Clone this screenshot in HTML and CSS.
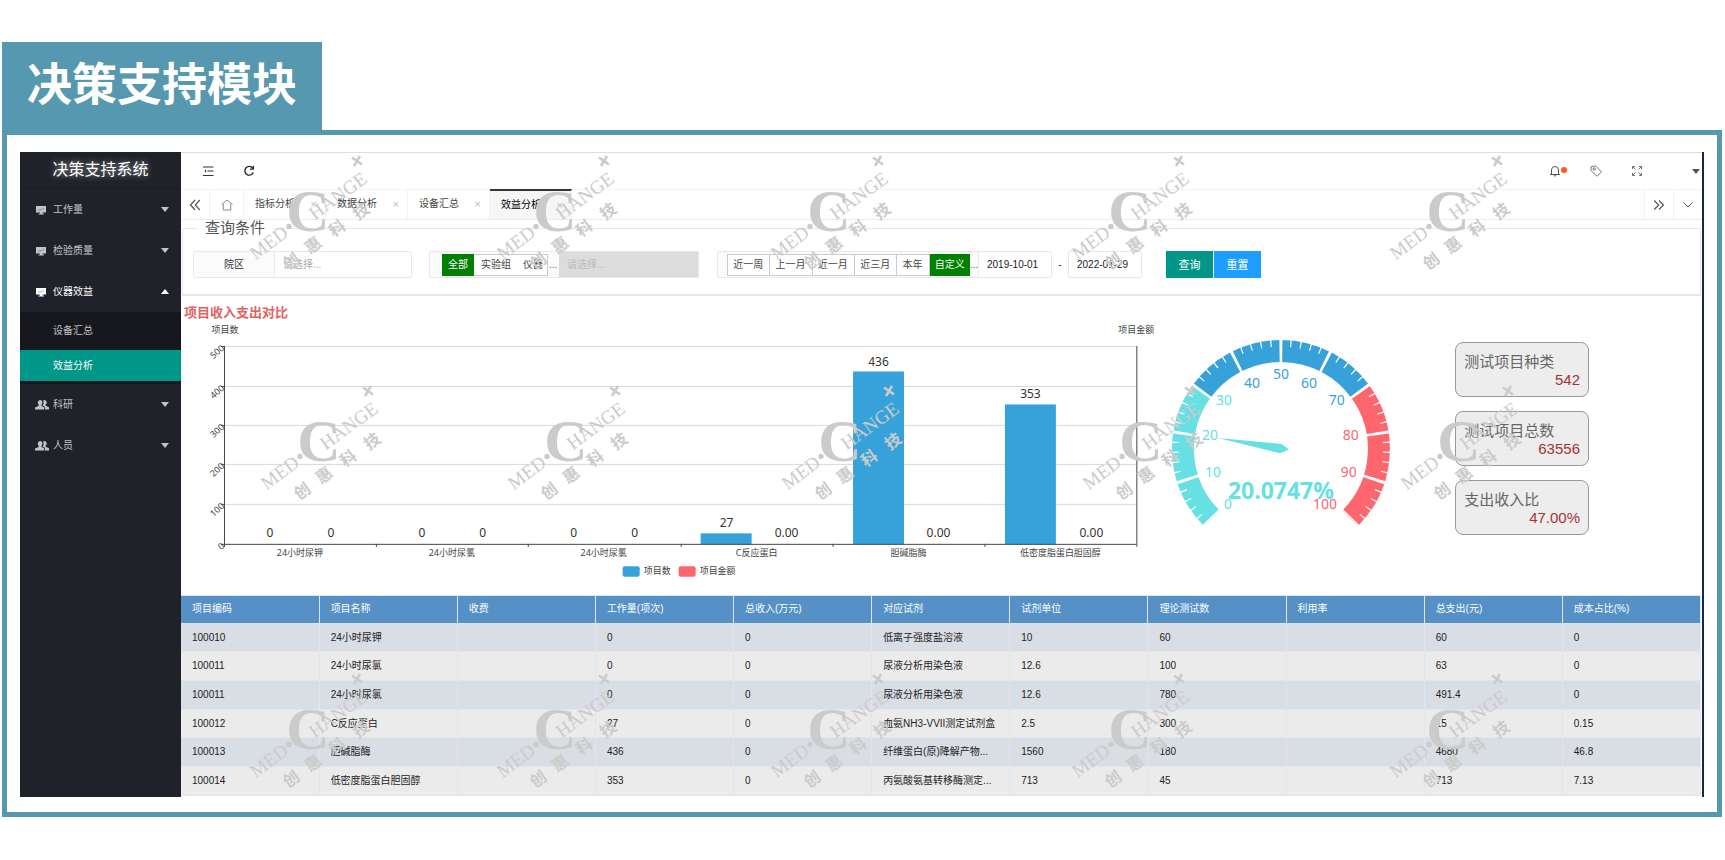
FILE: index.html
```html
<!DOCTYPE html>
<html lang="zh-CN">
<head>
<meta charset="utf-8">
<title>决策支持模块</title>
<link rel="stylesheet" href="styles.css">
</head>
<body>
<svg class="defs" aria-hidden="true">
  <symbol id="i-screen" viewBox="0 0 12 10"><path d="M1 1h10v6.500H7.500v1h1.500v1H3.500v-1H5v-1H1z" fill="currentColor"/><path d="M3 5.500l2-1 1.500.5L9 3.200" fill="none" stroke="#20222a" stroke-opacity=".5" stroke-width=".7"/></symbol>
  <symbol id="i-users" viewBox="0 0 14 10"><path d="M2.800 2.700a2.300 2.500 0 1 1 3.700 1.900v1.300L9 7.200V9.500H0V7.400l3.600-1.500V4.600A2.500 2.500 0 0 1 2.800 2.700z" fill="currentColor"/><path d="M8 .6a2.300 2.400 0 0 1 2.600 4v1.200L14 7.300v2.200H9.800V6.800L7.500 5.500c1.400-1.600 1.400-3.500.5-4.900z" fill="currentColor"/></symbol>
  <symbol id="i-wm" viewBox="0 0 150 130" overflow="visible">
    <g fill="#cbcbcb" text-anchor="middle">
      <text class="wm-roman" x="30" y="101" transform="rotate(-37 30 95)" font-size="19">MED</text>
      <circle cx="50" cy="78.500" r="2.700"/>
      <text class="wm-c" x="69" y="83" font-size="60">C</text>
      <text class="wm-roman" x="99" y="54" transform="rotate(-36 99 48)" font-size="19">HANGE</text>
      <path d="M113 9.500l10 7M115 18l6-10" stroke="#cbcbcb" stroke-width="2.600"/>
      <g class="wm-cn" font-size="16">
        <text x="52" y="119" transform="rotate(-36 52 113)">创</text>
        <text x="74" y="103" transform="rotate(-36 74 97)">惠</text>
        <text x="98" y="86" transform="rotate(-36 98 80)">科</text>
        <text x="122" y="69" transform="rotate(-36 122 63)">技</text>
      </g>
    </g>
  </symbol>
</svg>

<h1 class="module-title">决策支持模块</h1>
<div class="frame">
  <div class="app">
    <aside class="sidebar">
      <div class="logo">决策支持系统</div>
      <nav class="menu">
        <button class="menu-item" type="button"><svg class="mi"><use href="#i-screen"/></svg><span>工作量</span><i class="caret"></i></button>
        <button class="menu-item" type="button"><svg class="mi"><use href="#i-screen"/></svg><span>检验质量</span><i class="caret"></i></button>
        <button class="menu-item open" type="button"><svg class="mi"><use href="#i-screen"/></svg><span>仪器效益</span><i class="caret up"></i></button>
        <div class="submenu">
          <a href="#summary">设备汇总</a>
          <a class="active" href="#benefit">效益分析</a>
        </div>
        <button class="menu-item" type="button"><svg class="mi users"><use href="#i-users"/></svg><span>科研</span><i class="caret"></i></button>
        <button class="menu-item" type="button"><svg class="mi users"><use href="#i-users"/></svg><span>人员</span><i class="caret"></i></button>
      </nav>
    </aside>

    <main class="main">
      <header class="topbar">
        <button type="button" aria-label="折叠菜单"><svg width="12" height="12" viewBox="0 0 12 12" fill="none" stroke="#333"><path d="M1 2h10.500M5.500 6h6M1 10.500h10.500M3.500 4.800v2.400" stroke-width="1.200"/></svg></button>
        <button type="button" aria-label="刷新"><svg width="12" height="12" viewBox="0 0 12 12" fill="none" stroke="#222" stroke-width="1.300"><path d="M9.800 3.200A4.400 4.400 0 1 0 10.300 7.500"/><path d="M10.400.9v3.300H7"/></svg></button>
        <span class="spacer"></span>
        <button class="bell" type="button" aria-label="消息"><svg width="12" height="12" viewBox="0 0 12 12" fill="none" stroke="#555"><path d="M2.500 9V5a3.500 3.500 0 0 1 7 0v4M1 9.500h10M4.800 10.800h2.400"/></svg></button>
        <button type="button" aria-label="标签"><svg width="12" height="12" viewBox="0 0 12 12" fill="none" stroke="#666" stroke-width=".9"><path d="M1 1.800L5.500.8l6 6-4.500 4.500-6-5.800z"/><circle cx="4.200" cy="4" r="1.200"/></svg></button>
        <button type="button" aria-label="全屏"><svg width="12" height="12" viewBox="0 0 12 12" fill="none" stroke="#666" stroke-width=".9"><path d="M1.500 4V1.500H4M1.500 1.500L4.500 4.500M8 1.500h2.500V4M10.500 1.500L7.500 4.500M1.500 8v2.500H4M1.500 10.500L4.500 7.500M10.500 8v2.500H8M10.500 10.500L7.500 7.500"/></svg></button>
        <button class="user" type="button" aria-label="用户"><i class="caret dark"></i></button>
      </header>

      <div class="tabs">
        <button class="tool" type="button" aria-label="向左"><svg width="12" height="12" viewBox="0 0 12 12" fill="none" stroke="#555" stroke-width="1.200"><path d="M6 1L1.500 6 6 11M10.800 1L6.300 6l4.500 5"/></svg></button>
        <button class="tool home" type="button" aria-label="首页"><svg width="12" height="12" viewBox="0 0 12 12" fill="none" stroke="#888"><path d="M.5 5.500L6 1l5.500 4.500M2.300 5v6h7.400V5"/></svg></button>
        <a class="tab" href="#t1">指标分析<i>×</i></a>
        <a class="tab" href="#t2">数据分析<i>×</i></a>
        <a class="tab" href="#t3">设备汇总<i>×</i></a>
        <a class="tab current" href="#t4">效益分析<i>×</i></a>
        <span class="spacer"></span>
        <button class="tool right" type="button" aria-label="向右"><svg width="12" height="12" viewBox="0 0 12 12" fill="none" stroke="#555" stroke-width="1.200"><path d="M1.200 1.500L5.700 6l-4.500 4.500M6 1.500L10.500 6 6 10.500"/></svg></button>
        <button class="tool right" type="button" aria-label="更多"><svg width="12" height="12" viewBox="0 0 12 12" fill="none" stroke="#555"><path d="M1.500 3.500L6 8l4.500-4.500"/></svg></button>
      </div>

      <form>
        <fieldset class="query">
          <legend>查询条件</legend>
          <div class="query-row">
            <div class="field campus">
              <label for="campus">院区</label>
              <input id="campus" type="text" placeholder="请选择...">
            </div>
            <div class="field scope">
              <div class="seg">
                <button class="on" type="button">全部</button><button type="button">实验组</button><button type="button">仪器</button>
              </div>
              <span class="dots">...</span>
              <input type="text" aria-label="范围" placeholder="请选择..." disabled>
            </div>
            <div class="field period">
              <div class="seg lined">
                <button type="button">近一周</button><button type="button">上一月</button><button type="button">近一月</button><button type="button">近三月</button><button type="button">本年</button><button class="on" type="button">自定义</button>
              </div>
              <span class="dots">...</span>
              <input type="text" aria-label="开始日期" value="2019-10-01">
            </div>
            <span class="dash">-</span>
            <input class="end-date" type="text" aria-label="结束日期" value="2022-01-29">
            <div class="actions"><button class="search" type="button">查询</button><button class="reset" type="reset">重置</button></div>
          </div>
        </fieldset>
      </form>

      <h2 class="chart-title">项目收入支出对比</h2>
      <section class="charts">
        <svg class="bar-chart" viewBox="0 0 979 266" role="img" aria-label="项目收入支出对比">
          <path d="M44 24.500H956M44 64.500H956M44 103.500H956M44 142.500H956M44 182.500H956" stroke="#d8d8d8"/>
          <g fill="#37a2da"><rect x="520" y="211.500" width="51" height="11"/><rect x="672.500" y="49.500" width="51" height="173"/><rect x="824.500" y="82.500" width="51" height="140"/></g>
          <path d="M43.500 24V225M956.500 24V225M40 222.500H956M40 24.500h4M40 64.500h4M40 103.500h4M40 142.500h4M40 182.500h4M195.500 222v3M347.500 222v3M500.500 222v3M652.500 222v3M804.500 222v3" stroke="#444" fill="none"/>
          <g class="axis" text-anchor="middle">
            <text x="44" y="11">项目数</text><text x="956" y="11">项目金额</text>
            <text x="119" y="234">24小时尿钾</text><text x="271" y="234">24小时尿氯</text><text x="423" y="234">24小时尿氯</text><text x="576" y="234">C反应蛋白</text><text x="728" y="234">胆碱脂酶</text><text x="880" y="234">低密度脂蛋白胆固醇</text>
          </g>
          <g class="axis" text-anchor="end">
            <text transform="translate(44 27) rotate(-42)">500</text><text transform="translate(44 67) rotate(-42)">400</text><text transform="translate(44 106) rotate(-42)">300</text><text transform="translate(44 145) rotate(-42)">200</text><text transform="translate(44 185) rotate(-42)">100</text><text transform="translate(44 225) rotate(-42)">0</text>
          </g>
          <g class="value" text-anchor="middle">
            <text x="89" y="215">0</text><text x="150" y="215">0</text><text x="241" y="215">0</text><text x="302" y="215">0</text><text x="393" y="215">0</text><text x="454" y="215">0</text>
            <text x="546" y="205">27</text><text x="606" y="215">0.00</text><text x="698" y="44">436</text><text x="758" y="215">0.00</text><text x="850" y="76">353</text><text x="911" y="215">0.00</text>
          </g>
          <rect x="442" y="244.500" width="17" height="10.500" rx="2" fill="#37a2da"/><rect x="498" y="244.500" width="17" height="10.500" rx="2" fill="#fd666d"/>
          <g class="axis"><text x="463" y="252">项目数</text><text x="519" y="252">项目金额</text></g>
        </svg>

        <svg class="gauge" viewBox="0 0 240 266" role="img" aria-label="20.0747%">
          <g fill="none" stroke-width="22">
            <path d="M52.700 196.300A98 98 0 0 1 42.700 69.400" stroke="#67e0e3"/>
            <path d="M42.700 69.400A98 98 0 0 1 201.300 69.400" stroke="#37a2da"/>
            <path d="M201.300 69.400A98 98 0 0 1 191.300 196.300" stroke="#fd666d"/>
          </g>
          <path d="M47 202A106 106 0 1 1 197 202" pathLength="50" fill="none" stroke="#fff" stroke-width="7" stroke-dasharray=".12 .88" stroke-dashoffset=".06"/>
          <path d="M52.700 196.300A98 98 0 1 1 191.300 196.300" pathLength="10" fill="none" stroke="#fff" stroke-width="24" stroke-dasharray=".06 .94" stroke-dashoffset=".03"/>
          <path d="M59 116L122.500 122 130 127.700 121 131.300z" fill="#67e0e3"/>
          <g class="ticks" text-anchor="middle">
            <g fill="#67e0e3"><text x="69" y="187">0</text><text x="54" y="155">10</text><text x="51" y="118">20</text><text x="65" y="83">30</text></g>
            <g fill="#37a2da"><text x="93" y="66">40</text><text x="122" y="57">50</text><text x="150" y="66">60</text><text x="178" y="83">70</text></g>
            <g fill="#fd666d"><text x="192" y="118">80</text><text x="190" y="155">90</text><text x="166" y="187">100</text></g>
          </g>
          <text class="total" x="122" y="177" text-anchor="middle" fill="#67e0e3">20.0747%</text>
        </svg>

        <div class="stats">
          <div class="stat"><span>测试项目种类</span><b>542</b></div>
          <div class="stat"><span>测试项目总数</span><b>63556</b></div>
          <div class="stat"><span>支出收入比</span><b>47.00%</b></div>
        </div>
      </section>

      <table class="grid">
        <thead><tr><th>项目编码</th><th>项目名称</th><th>收费</th><th>工作量(项次)</th><th>总收入(万元)</th><th>对应试剂</th><th>试剂单位</th><th>理论测试数</th><th>利用率</th><th>总支出(元)</th><th>成本占比(%)</th></tr></thead>
        <tbody>
          <tr><td>100010</td><td>24小时尿钾</td><td></td><td>0</td><td>0</td><td>低离子强度盐溶液</td><td>10</td><td>60</td><td></td><td>60</td><td>0</td></tr>
          <tr><td>100011</td><td>24小时尿氯</td><td></td><td>0</td><td>0</td><td>尿液分析用染色液</td><td>12.6</td><td>100</td><td></td><td>63</td><td>0</td></tr>
          <tr><td>100011</td><td>24小时尿氯</td><td></td><td>0</td><td>0</td><td>尿液分析用染色液</td><td>12.6</td><td>780</td><td></td><td>491.4</td><td>0</td></tr>
          <tr><td>100012</td><td>C反应蛋白</td><td></td><td>27</td><td>0</td><td>血氨NH3-VVII测定试剂盒</td><td>2.5</td><td>300</td><td></td><td>15</td><td>0.15</td></tr>
          <tr><td>100013</td><td>胆碱脂酶</td><td></td><td>436</td><td>0</td><td>纤维蛋白(原)降解产物...</td><td>1560</td><td>180</td><td></td><td>4680</td><td>46.8</td></tr>
          <tr><td>100014</td><td>低密度脂蛋白胆固醇</td><td></td><td>353</td><td>0</td><td>丙氨酸氨基转移酶测定...</td><td>713</td><td>45</td><td></td><td>713</td><td>7.13</td></tr>
        </tbody>
      </table>
    </main>

    <div class="watermarks" aria-hidden="true">
      <div class="wm-row"><svg><use href="#i-wm"/></svg><svg><use href="#i-wm"/></svg><svg><use href="#i-wm"/></svg><svg><use href="#i-wm"/></svg><svg><use href="#i-wm"/></svg></div>
      <div class="wm-row shifted"><svg><use href="#i-wm"/></svg><svg><use href="#i-wm"/></svg><svg><use href="#i-wm"/></svg><svg><use href="#i-wm"/></svg><svg><use href="#i-wm"/></svg></div>
      <div class="wm-row"><svg><use href="#i-wm"/></svg><svg><use href="#i-wm"/></svg><svg><use href="#i-wm"/></svg><svg><use href="#i-wm"/></svg><svg><use href="#i-wm"/></svg></div>
    </div>
  </div>
</div>
</body>
</html>
```
FILE: styles.css
```css
* { box-sizing: border-box; }
body {
  margin: 0;
  padding: 42px 3px 40px 2px;
  background: #fff;
  color: #333;
  font: 10px/16px "Liberation Sans", "Noto Sans CJK SC", sans-serif;
}
button, input { font: inherit; color: inherit; margin: 0; padding: 0; border: 0; background: none; border-radius: 0; }
a { color: inherit; text-decoration: none; }
svg { display: block; }
i { font-style: normal; }
.defs { display: none; }
.spacer { flex: 1; }

.module-title {
  width: fit-content;
  margin: 0;
  padding: 8px 25px 16px;
  background: #5698af;
  color: #fff;
  font: 700 45px/64px "Noto Sans CJK SC", sans-serif;
}
.frame { border: 5px solid #5698af; padding: 17px 13px 15px; }
.app { position: relative; display: flex; border-right: 2px solid #14284b; }

.sidebar { width: 161px; flex: none; background: #20222a; color: #c3c4c6; }
.logo {
  height: 37px;
  border-bottom: 1px solid #1a1c22;
  color: #fff;
  font-size: 16px;
  line-height: 36px;
  text-align: center;
  text-shadow: 0 0 6px rgba(255, 255, 255, .6);
}
.menu { display: flex; flex-direction: column; }
.menu-item { display: flex; align-items: center; height: 41px; padding: 0 12px 0 15px; text-align: left; }
.menu-item.open { color: #fff; }
.menu-item span { flex: 1; }
.mi { width: 12px; height: 10px; margin-right: 6px; }
.mi.users { width: 14px; margin-right: 4px; }
.caret { width: 0; height: 0; border: 4px solid transparent; border-top: 5px solid #c3c4c6; border-bottom: 0; }
.caret.up { border-top: 0; border-bottom: 5px solid #fff; }
.caret.dark { border-top-color: #555; }
.submenu { display: flex; flex-direction: column; padding-bottom: 3px; background: #17181d; }
.submenu a { padding-left: 33px; line-height: 38px; }
.submenu .active { background: #009688; color: #fff; line-height: 31px; }

.main { flex: 1; min-width: 0; }
.topbar { display: flex; align-items: center; height: 37px; border-top: 1px solid #ddd; padding-left: 21px; gap: 29px; }
.topbar .bell { position: relative; }
.bell::after { content: ""; position: absolute; left: 12px; top: 2px; width: 6px; height: 6px; border-radius: 50%; background: #ff5722; }
.topbar .user { padding-left: 20px; margin-right: 2px; }
.topbar .user .caret { display: block; }

.tabs { display: flex; height: 31px; border-top: 1px solid #f2f2f2; border-bottom: 1px solid #ececec; }
.tool { display: flex; align-items: center; justify-content: center; width: 29px; border-right: 1px solid #f2f2f2; }
.tool.home { width: 34px; }
.tool.right { border-right: 0; border-left: 1px solid #f2f2f2; }
.tab { display: flex; justify-content: space-between; width: 82px; padding: 0 8px 0 11px; line-height: 28px; border-right: 1px solid #f2f2f2; color: #444; }
.tab i { color: #bbb; font-size: 11px; }
.tab.current { background: #f6f6f6; color: #000; border-top: 2px solid #33343c; margin-top: -1px; }

.query { margin: 0 1px; padding: 15px 10px 16px; border: 1px solid #e8e8e8; border-bottom-width: 2px; min-width: 0; }
.query legend { height: 16px; margin-left: 4px; padding: 0 8px; font-size: 15px; line-height: 16px; color: #555; }
.query-row { display: flex; align-items: center; height: 27px; }
.field, .end-date { display: flex; align-items: center; height: 27px; border: 1px solid #e8e8e8; border-radius: 2px; }
.field input { height: 100%; min-width: 0; flex: 1; padding-left: 8px; }
.field input::placeholder { color: #aaa; opacity: 1; }
.campus { width: 219px; }
.campus label { width: 81px; height: 100%; line-height: 25px; text-align: center; background: #fbfbfb; border-right: 1px solid #e8e8e8; }
.scope { width: 270px; margin-left: 17px; padding-left: 12px; background: #fbfbfb; }
.scope input { background: #dcdcdc; }
.scope input::placeholder { color: #bbb; }
.seg { display: flex; height: 22px; border: 1px solid #ccc; background: #fff; color: #444; }
.seg button { padding: 0 7px; line-height: 20px; white-space: nowrap; }
.seg .on { background: #008000; color: #fff; margin: -1px 0; }
.scope .seg { border-left: 0; }
.scope .seg .on { padding: 0 6px; }
.scope .seg button:last-child { padding: 0 4px 0 5px; }
.lined button + button { border-left: 1px solid #ccc; }
.seg.lined button { padding: 0 6px 0 5px; }
.seg.lined .on { margin-right: -1px; padding: 0 5px; }
.dots { width: 11px; padding-left: 1px; color: #666; }
.period { width: 335px; margin-left: 18px; padding-left: 9px; background: #fbfbfb; }
.period .seg button { flex: 1 0 auto; }
.period .seg { flex: 0 0 243px; }
.period .dots { width: 8px; padding-left: 0; }
.period input { background: #fff; border-left: 1px solid #e8e8e8; color: #222; }
.dash { width: 16px; text-align: center; }
.end-date { width: 74px; padding-left: 8px; color: #222; }
.actions { display: flex; gap: 1px; margin-left: 24px; }
.actions button { width: 47px; height: 27px; color: #fff; font-size: 11px; }
.search { background: #009688; }
.reset { background: #1e9fff; }

.chart-title { margin: 0; padding: 7px 0 0 3px; color: #e0645f; font-size: 13px; line-height: 19px; }
.charts { display: grid; grid-template-columns: 979fr 240fr 303fr; }
.charts > svg { width: 100%; }
.axis { font-size: 9px; font-family: "Noto Sans", "Noto Sans CJK SC", sans-serif; fill: #444; }
.value { font-size: 12px; font-family: "Noto Sans", sans-serif; fill: #333; }
.ticks { font-size: 14px; font-family: "Noto Sans", sans-serif; }
.total { font: 700 23px "Open Sans", "Noto Sans", sans-serif; }
.stats { display: flex; flex-direction: column; gap: 14px; padding: 20px 113px 0 56px; }
.stat { display: flex; flex-direction: column; height: 55px; padding: 10px 8px 0; border: 1px solid #999; border-radius: 8px; background: #ededed; color: #666; font-size: 15px; line-height: 18px; white-space: nowrap; }
.stat b { color: #a83232; font-weight: 400; text-align: right; line-height: 17px; }

.grid { width: calc(100% - 1px); height: 201px; margin: 7px 0 1px; border-collapse: collapse; table-layout: fixed; }
.grid th, .grid td { padding: 0 0 0 11px; border: 1px solid #e3e5e8; border-left-width: 0; text-align: left; font-weight: 400; line-height: 16px; white-space: nowrap; color: #222; }
.grid th { height: 28px; background: #5590c6; color: #fff; }
.grid tbody tr { background: #ebebeb; }
.grid tbody tr:nth-child(odd) { background: #d9dde4; }

.watermarks { position: absolute; inset: 0; pointer-events: none; }
.wm-row { position: relative; height: 230px; }
.wm-row.shifted { height: 288px; margin: 0 -11px 0 11px; }
.wm-row svg { position: absolute; top: -4px; width: 150px; height: 130px; overflow: visible; }
.wm-row svg:nth-child(1) { left: 13%; }
.wm-row svg:nth-child(2) { left: 27.7%; }
.wm-row svg:nth-child(3) { left: 44%; }
.wm-row svg:nth-child(4) { left: 61.9%; }
.wm-row svg:nth-child(5) { left: 80.8%; }
.wm-roman, .wm-c { font-family: "Liberation Serif", serif; }
.wm-c { font-weight: 700; }
.wm-cn { font-family: "Noto Sans CJK SC", sans-serif; font-weight: 700; }
```
